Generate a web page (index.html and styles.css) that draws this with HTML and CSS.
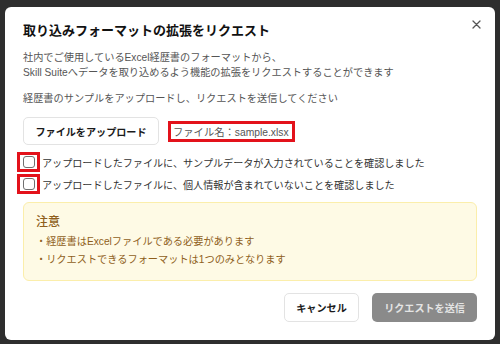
FILE: index.html
```html
<!DOCTYPE html>
<html lang="ja">
<head>
<meta charset="utf-8">
<link rel="stylesheet" href="styles.css">
</head>
<body>
<div class="modal">
  <div class="modal-header">
    <h1 class="title">取り込みフォーマットの拡張をリクエスト</h1>
    <button class="close" aria-label="閉じる">
      <svg width="9" height="9" viewBox="0 0 9 9"><path d="M1 1L8 8M8 1L1 8" stroke="#555" stroke-width="1.3" stroke-linecap="round"/></svg>
    </button>
  </div>
  <div class="modal-body">
    <p class="desc">社内でご使用しているExcel経歴書のフォーマットから、<br>Skill Suiteへデータを取り込めるよう機能の拡張をリクエストすることができます</p>
    <p class="desc desc2">経歴書のサンプルをアップロードし、リクエストを送信してください</p>
    <div class="upload-row">
      <button class="btn btn-outline">ファイルをアップロード</button>
      <span class="filename">ファイル名：sample.xlsx</span>
    </div>
    <div class="checks">
      <label class="check-row"><span class="mark"><span class="box"></span></span>アップロードしたファイルに、サンプルデータが入力されていることを確認しました</label>
      <label class="check-row"><span class="mark"><span class="box"></span></span>アップロードしたファイルに、個人情報が含まれていないことを確認しました</label>
    </div>
    <div class="notice">
      <div class="notice-title">注意</div>
      <div class="notice-item">・経歴書はExcelファイルである必要があります</div>
      <div class="notice-item">・リクエストできるフォーマットは1つのみとなります</div>
    </div>
  </div>
  <div class="modal-footer">
    <button class="btn btn-outline btn-cancel">キャンセル</button>
    <button class="btn btn-disabled">リクエストを送信</button>
  </div>
</div>
</body>
</html>
```
FILE: styles.css
```css
* { box-sizing: border-box; }
html, body { margin: 0; padding: 0; }
body {
  width: 500px;
  height: 344px;
  background: #2e2e2e;
  font-family: "Liberation Sans", "Noto Sans CJK JP", sans-serif;
  overflow: hidden;
  padding: 7px 5px 0 5px;
}
.modal {
  width: 490px;
  height: 333px;
  background: #fff;
  border-radius: 6px;
  display: flex;
  flex-direction: column;
  padding: 14px 18px 18px 18px;
}
.modal-header {
  display: flex;
  justify-content: space-between;
  align-items: flex-start;
}
.title {
  margin: 0;
  font-size: 13px;
  line-height: 20px;
  font-weight: 700;
  color: #111;
}
.close {
  border: 0;
  background: none;
  padding: 0;
  margin: 0;
  width: 9px;
  height: 9px;
  display: flex;
  margin-top: -1px;
  margin-right: -4px;
}
.modal-body {
  display: flex;
  flex-direction: column;
}
.desc {
  margin: 9px 0 0 0;
  font-size: 10.2px;
  line-height: 15px;
  color: #555;
}
.desc2 { margin-top: 10.5px; }
.upload-row {
  display: flex;
  align-items: center;
  gap: 9px;
  margin-top: 11.5px;
}
.btn {
  font-family: inherit;
  font-size: 10.1px;
  font-weight: 700;
  border-radius: 5px;
  height: 28px;
  padding: 0;
  white-space: nowrap;
  display: inline-flex;
  align-items: center;
  justify-content: center;
  cursor: pointer;
}
.btn-outline {
  background: #fff;
  border: 1px solid #e3e3e3;
  color: #1a1a1a;
  width: 136px;
}
.filename {
  border: 3px solid #e3121b;
  height: 21px;
  display: inline-flex;
  align-items: center;
  padding: 0 3px 0 2px;
  font-size: 10.3px;
  color: #555;
}
.checks {
  display: flex;
  flex-direction: column;
  margin-top: 6px;
}
.check-row {
  display: flex;
  align-items: center;
  height: 22px;
  font-size: 10.1px;
  color: #333;
  margin-left: -6px;
  white-space: nowrap;
}
.mark {
  width: 23px;
  height: 20px;
  border: 3px solid #e3121b;
  display: inline-flex;
  align-items: center;
  justify-content: center;
  margin-right: 2px;
}
.box {
  width: 12px;
  height: 12px;
  border: 1.5px solid #707070;
  border-radius: 3px;
  background: #fff;
}
.notice {
  margin-top: 7px;
  background: #fefae5;
  border: 1px solid #fbeeab;
  border-radius: 6px;
  padding: 10px 13px 11px 12px;
  color: #8f5f1c;
}
.notice-title {
  font-size: 12px;
  line-height: 18px;
  font-weight: 500;
}
.notice-item {
  font-size: 10.2px;
  line-height: 18px;
}
.notice-title + .notice-item { margin-top: 2px; }
.modal-footer {
  margin-top: auto;
  display: flex;
  justify-content: flex-end;
  gap: 13px;
}
.btn-cancel {
  width: 75px;
  height: 29px;
}
.btn-disabled {
  width: 105px;
  height: 29px;
  background: #8a8a8a;
  border: 0;
  color: #e4e4e4;
}
```
